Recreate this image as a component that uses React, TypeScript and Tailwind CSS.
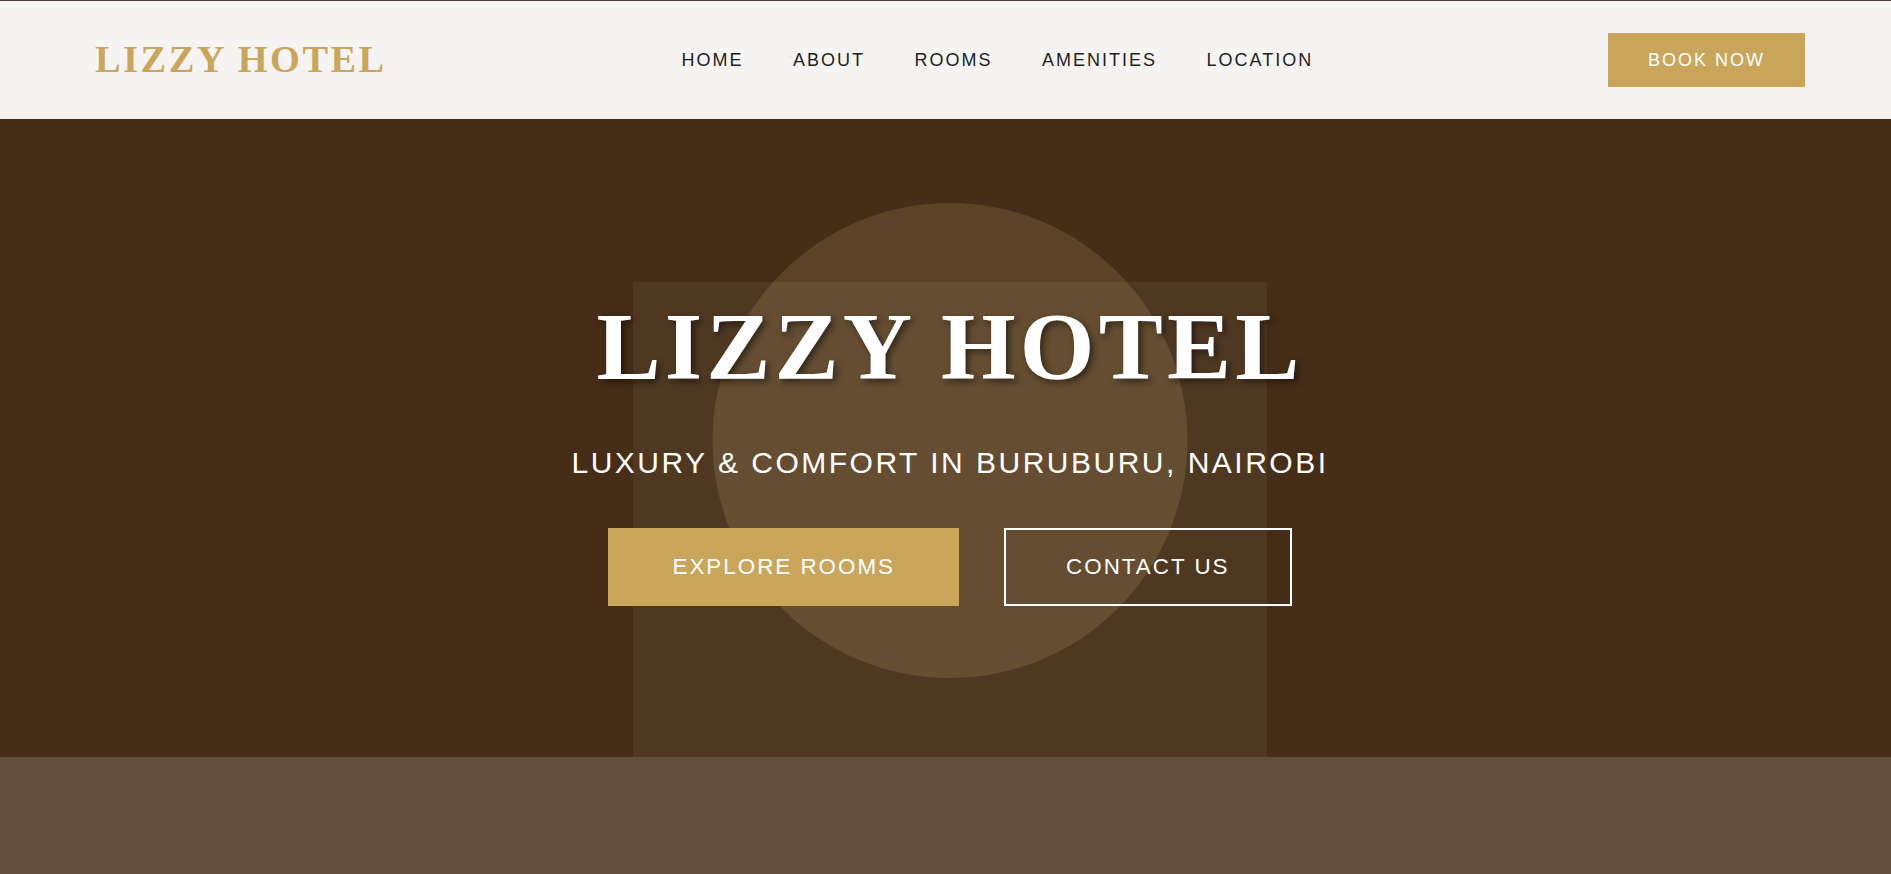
import React from 'react';

const navLinks = ['HOME', 'ABOUT', 'ROOMS', 'AMENITIES', 'LOCATION'];

function Header() {
  return (
    <header className="flex h-[119px] items-center justify-between border-t border-[#4b3b3b] bg-[#f5f4f2] px-[95px]">
      <a
        href="#"
        className="font-['Liberation_Serif',serif] text-[38.4px] font-bold tracking-[2.5px] text-[#c9a65b]"
      >
        LIZZY HOTEL
      </a>
      <nav className="flex items-center gap-[49.5px]">
        {navLinks.map((link) => (
          <a
            key={link}
            href="#"
            className="text-[18px] tracking-[2px] text-[#1f1f1f]"
          >
            {link}
          </a>
        ))}
      </nav>
      <button className="flex h-[54px] items-center bg-[#c9a65b] px-[40px] text-[18px] tracking-[2px] text-white">
        BOOK NOW
      </button>
    </header>
  );
}

function Hero() {
  return (
    <section className="relative h-[638px] overflow-hidden bg-[#452d17]">
      {/* decorative shapes behind the text */}
      <div className="absolute left-1/2 top-[84px] h-[475px] w-[475px] -translate-x-1/2 rounded-full bg-[#5c4327]" />
      <div className="absolute bottom-0 left-[633.3px] top-[163px] w-[633.3px] bg-[#f0f0d8]/[0.06]" />

      <div className="relative flex flex-col items-center pt-[173px]">
        <h1 className="font-['Liberation_Serif',serif] text-[96px] font-bold leading-[1.149] tracking-[4.2px] text-white [text-shadow:3px_3px_6px_rgba(0,0,0,0.5)]">
          LIZZY HOTEL
        </h1>
        <p className="mt-[44px] text-[30px] leading-[1.149] tracking-[2.5px] text-white">
          LUXURY &amp; COMFORT IN BURUBURU, NAIROBI
        </p>
        <div className="mt-[47px] flex items-center gap-[45px]">
          <a
            href="#"
            className="border-2 border-[#c9a65b] bg-[#c9a65b] px-[62px] py-[24px] text-[22.4px] leading-[1.15] tracking-[2px] text-white"
          >
            EXPLORE ROOMS
          </a>
          <a
            href="#"
            className="border-2 border-white px-[60px] py-[24px] text-[22.4px] leading-[1.15] tracking-[2px] text-white"
          >
            CONTACT US
          </a>
        </div>
      </div>
    </section>
  );
}

export default function App() {
  return (
    <div className="h-[874px] w-full overflow-hidden font-['Liberation_Sans',Arial,sans-serif]">
      <div className="w-[1900px]">
        <Header />
        <Hero />
        <section className="h-[117px] bg-[#5f4f3b]" />
      </div>
    </div>
  );
}
